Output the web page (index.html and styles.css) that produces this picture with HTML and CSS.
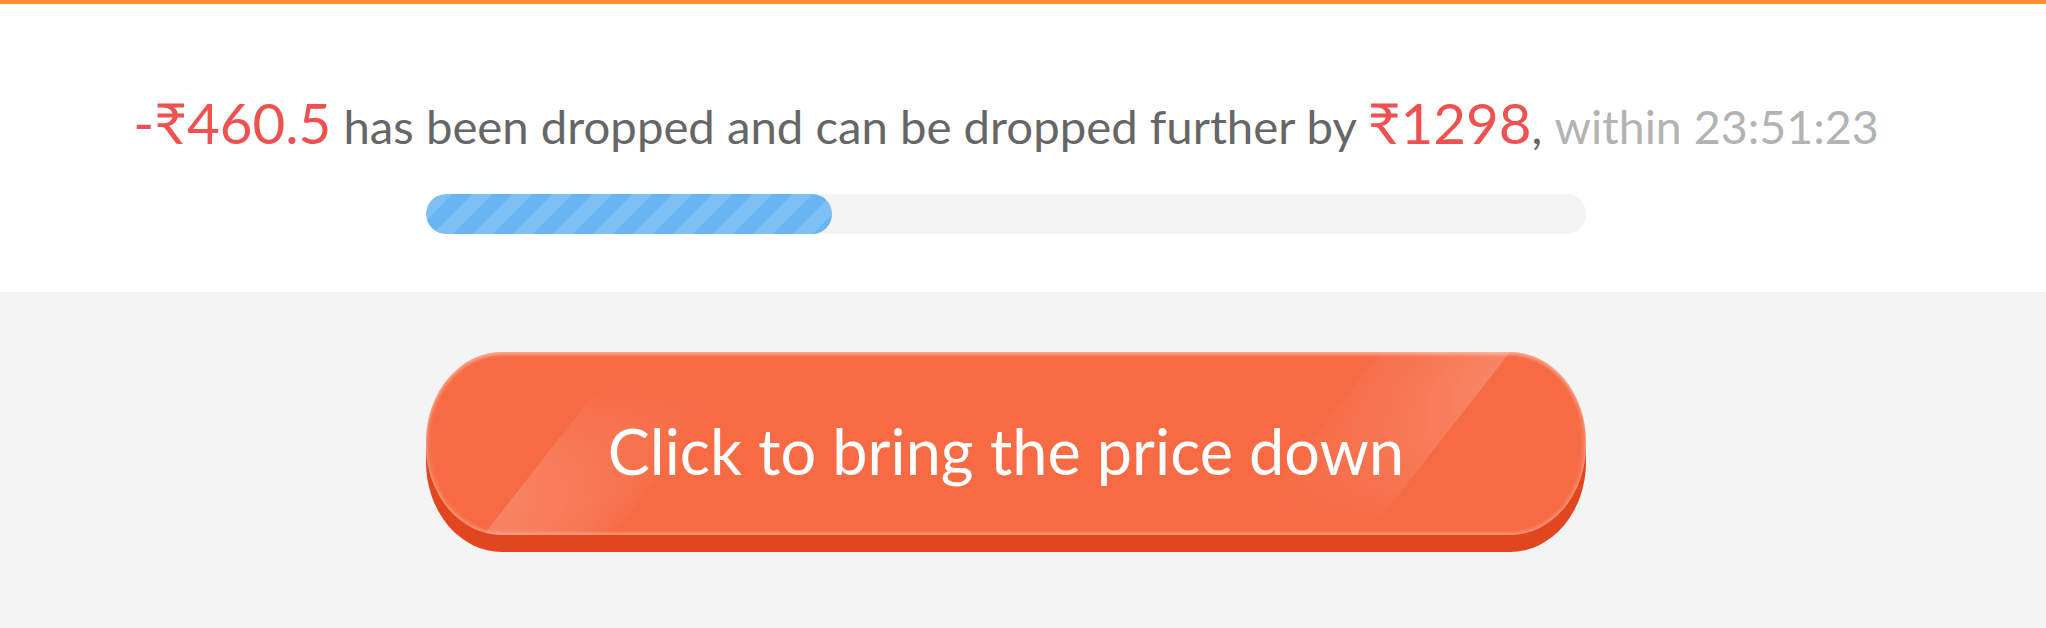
FILE: index.html
```html
<!DOCTYPE html>
<html lang="en">
<head>
<meta charset="utf-8">
<title>Price drop</title>
<link rel="stylesheet" href="styles.css">
</head>
<body>
<section class="panel">
  <p class="msg"><span class="amt">-₹460.5</span> has been dropped and can be dropped further by <span class="amt">₹1298</span>, <span class="muted">within 23:51:23</span></p>
  <div class="track"><div class="fill" style="width:35%"></div></div>
</section>
<section class="action">
  <button class="cta" type="button"><span class="cta-label">Click to bring the price down</span></button>
</section>
</body>
</html>
```
FILE: styles.css
```css
html, body {
  margin: 0;
  padding: 0;
  background: #f4f4f4;
  height: 100%;
}
body {
  font-family: Lato, "Open Sans", sans-serif;
}
.panel {
  background: #fff;
  border-top: 4px solid #ff8f33;
  height: 292px;
  box-sizing: border-box;
  display: flex;
  flex-direction: column;
  align-items: center;
  padding: 86px 34px 0 0;
}
.msg {
  margin: 0;
  font-size: 47.3px;
  line-height: 64px;
  color: #666;
  white-space: nowrap;
}
.amt {
  color: #ef5050;
  font-size: 56.5px;
}
.muted {
  color: #b3b3b3;
  font-size: 46.5px;
}
.track {
  margin-top: 36px;
  width: 1160px;
  height: 40px;
  border-radius: 20px;
  background: #f4f4f4;
  overflow: hidden;
}
.fill {
  height: 100%;
  border-radius: 20px;
  background-color: #67b5f2;
  background-image: repeating-linear-gradient(-45deg, #67b5f2 0, #67b5f2 14.14px, #7cc0f5 14.14px, #7cc0f5 28.28px);
}
.action {
  display: flex;
  justify-content: center;
  padding: 60px 34px 0 0;
}
.cta {
  position: relative;
  overflow: hidden;
  width: 1160px;
  height: 183px;
  border: 0;
  padding: 14px 0 0;
  border-radius: 76px / 90px;
  background: #f76b44;
  color: #fff;
  font-family: Lato, "Open Sans", sans-serif;
  font-size: 63px;
  cursor: pointer;
  box-shadow: 0 17px 0 #e2461f,
    inset 0 3px 3px rgba(255,255,255,0.32),
    inset 0 -3px 3px rgba(255,255,255,0.16),
    inset 3px 0 4px rgba(255,255,255,0.14),
    inset -3px 0 4px rgba(255,255,255,0.14);
}
.cta::before,
.cta::after {
  content: "";
  position: absolute;
  width: 130px;
  transform: skewX(-38deg);
  pointer-events: none;
}
.cta::before {
  left: 117px;
  top: 30px;
  height: 153px;
  background: linear-gradient(to right, rgba(255,255,255,0.17), rgba(255,255,255,0.09) 70%, rgba(255,255,255,0.02));
  -webkit-mask-image: linear-gradient(to top, #000 20%, rgba(0,0,0,0.6) 60%, transparent);
  mask-image: linear-gradient(to top, #000 20%, rgba(0,0,0,0.6) 60%, transparent);
}
.cta::after {
  left: 886px;
  top: 0;
  height: 175px;
  background: linear-gradient(to right, rgba(255,255,255,0.03), rgba(255,255,255,0.1) 50%, rgba(255,255,255,0.18));
  -webkit-mask-image: linear-gradient(to bottom, #000 20%, rgba(0,0,0,0.6) 60%, transparent);
  mask-image: linear-gradient(to bottom, #000 20%, rgba(0,0,0,0.6) 60%, transparent);
}
.cta-label {
  position: relative;
  z-index: 1;
}
```
